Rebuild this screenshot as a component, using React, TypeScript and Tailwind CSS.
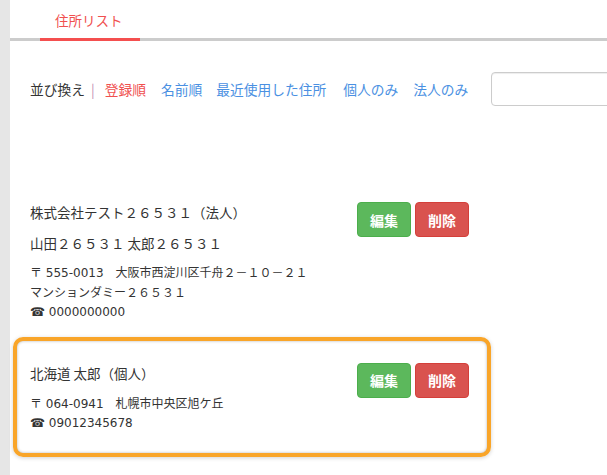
import React from "react";

const font = { fontFamily: '"Noto Sans CJK JP", "Noto Sans", sans-serif' };
const addrFont = { fontFamily: '"DejaVu Sans", "Noto Sans CJK JP", sans-serif' };

function Buttons() {
  return (
    <div className="flex gap-[4px] shrink-0">
      <button className="w-[54px] h-[35px] rounded-[4px] bg-[#5cb85c] border border-[#4cae4c] text-white text-[14px] font-bold leading-none">
        編集
      </button>
      <button className="w-[54px] h-[35px] rounded-[4px] bg-[#d9534f] border border-[#d43f3a] text-white text-[14px] font-bold leading-none">
        削除
      </button>
    </div>
  );
}

export default function App() {
  return (
    <div className="w-[607px] h-[475px] overflow-hidden flex bg-white text-[#333]" style={font}>
      <div className="w-[10px] shrink-0 bg-[#e6e6e6]" />
      <div className="flex-1 min-w-0">
        {/* tabs */}
        <div className="h-[41px] border-b-[3px] border-[#cccccc] pl-[30px] flex">
          <div className="w-[100px] h-[41px] -mb-[3px] border-b-[3px] border-[#f44f4f] pl-[15px] pt-[7px]">
            <span className="text-[13.5px] leading-[20px] text-[#f0504f]">住所リスト</span>
          </div>
        </div>

        {/* sort row */}
        <div className="mt-[31px] h-[34px] pl-[20px] flex items-center text-[13.75px] leading-[20px] whitespace-nowrap">
          <span>並び換え</span>
          <span className="ml-[6px] text-[#c58fb5]">|</span>
          <span className="ml-[10px] text-[#f0504f]">登録順</span>
          <span className="ml-[15px] text-[#4a90e2]">名前順</span>
          <span className="ml-[14px] text-[#4a90e2]">最近使用した住所</span>
          <span className="ml-[17px] text-[#4a90e2]">個人のみ</span>
          <span className="ml-[15px] text-[#4a90e2]">法人のみ</span>
          <input
            className="ml-[23px] w-[200px] h-[34px] shrink-0 rounded-[4px] border border-[#cccccc] shadow-[inset_0_1px_1px_rgba(0,0,0,0.075)] outline-none"
            type="text"
          />
        </div>

        {/* cards */}
        <div className="mt-[70px] ml-[3px] w-[478px]">
          <div className="border-4 border-transparent rounded-[10px]">
            <div className="pl-[13px] pr-[18px] pt-[22px] pb-[10px] flex justify-between">
              <div>
                <div className="text-[13.5px] leading-[20px]">株式会社テスト２６５３１（法人）</div>
                <div className="mt-[11px] text-[13.5px] leading-[20px]">山田２６５３１ 太郎２６５３１</div>
                <div className="mt-[11px] text-[12px] leading-[19.5px]" style={addrFont}>
                  <div>〒 555-0013　大阪市西淀川区千舟２－１０－２１</div>
                  <div>マンションダミー２６５３１</div>
                  <div>☎ 0000000000</div>
                </div>
              </div>
              <Buttons />
            </div>
          </div>

          <div className="border-4 border-[#f9a529] rounded-[10px] shadow-[0_1px_4px_rgba(0,0,0,0.18)]">
            <div className="rounded-[6px] shadow-[inset_0_0_3px_rgba(0,0,0,0.3)] pl-[13px] pr-[18px] pt-[22px] pb-[19px] flex justify-between">
              <div>
                <div className="text-[13.5px] leading-[20px]">北海道 太郎（個人）</div>
                <div className="mt-[12px] text-[12px] leading-[19.5px]" style={addrFont}>
                  <div>〒 064-0941　札幌市中央区旭ケ丘</div>
                  <div>☎ 09012345678</div>
                </div>
              </div>
              <Buttons />
            </div>
          </div>
        </div>
      </div>
    </div>
  );
}
